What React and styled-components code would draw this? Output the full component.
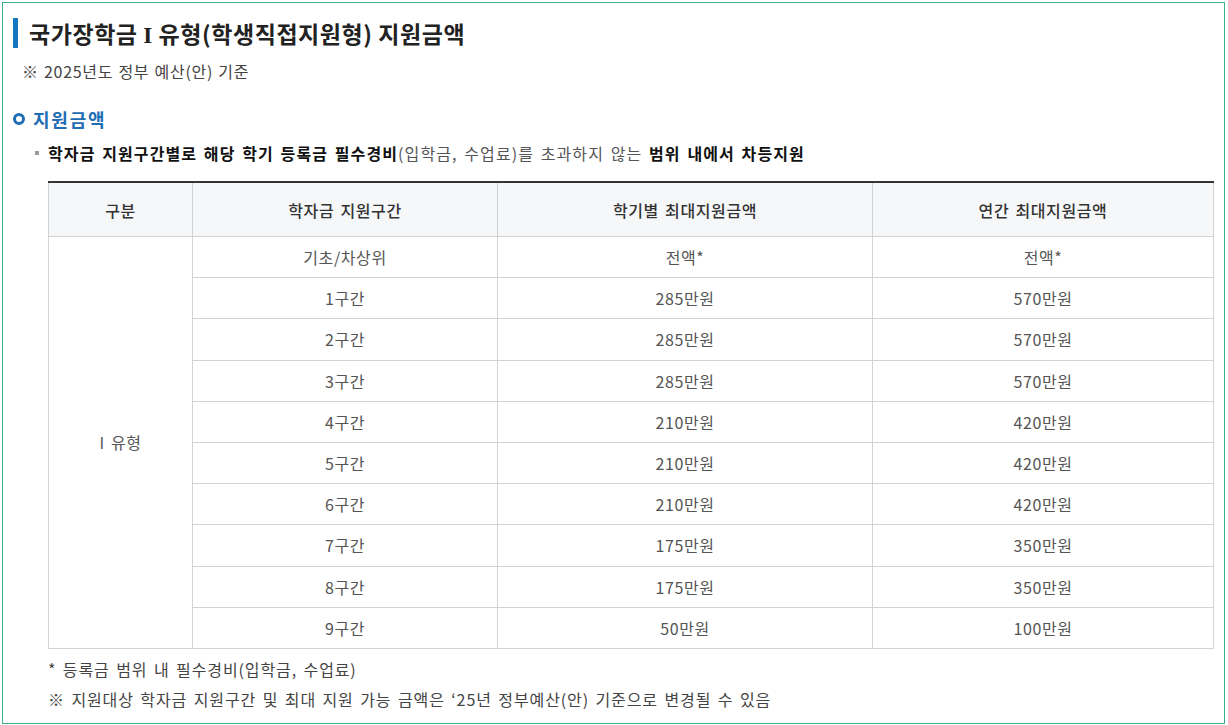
import React from 'react';
import styled, { createGlobalStyle } from 'styled-components';

const GlobalStyle = createGlobalStyle`
  html, body {
    margin: 0;
    padding: 0;
    background: #fff;
  }
  body {
    font-family: "Noto Sans CJK KR", "Noto Sans", sans-serif;
    color: #333;
  }
`;

const Frame = styled.div`
  box-sizing: border-box;
  width: 1223px;
  height: 722px;
  margin: 2px 0 0 2px;
  border: 1px solid #3bb08b;
  padding: 15px 11px 0 10px;
`;

const Title = styled.h2`
  margin: 0;
  border-left: 5px solid #1577c2;
  padding-left: 11px;
  font-size: 23px;
  line-height: 30px;
  font-weight: 700;
  letter-spacing: 0.55px;
  color: #222;
`;

const Roman = styled.span`
  font-family: "Liberation Serif", serif;
  line-height: 0;
`;

const Basis = styled.p`
  margin: 12px 0 0 9px;
  font-size: 16px;
  line-height: 22px;
  letter-spacing: 0.7px;
  word-spacing: 1px;
  color: #444;
`;

const SectionHead = styled.h3`
  margin: 24px 0 0;
  display: flex;
  align-items: center;
  gap: 8px;
  font-size: 18px;
  line-height: 26px;
  font-weight: 700;
  letter-spacing: 1.8px;
  color: #1f6db3;

  &::before {
    content: '';
    box-sizing: border-box;
    width: 12px;
    height: 12px;
    border: 3px solid #1f6db3;
    border-radius: 50%;
  }
`;

const BulletLine = styled.p`
  margin: 9px 0 0 22px;
  display: flex;
  align-items: center;
  gap: 9px;
  font-size: 16px;
  line-height: 24px;
  letter-spacing: 1.1px;
  word-spacing: 2px;
  color: #555;

  &::before {
    content: '';
    width: 4px;
    height: 4px;
    background: #9a9a9a;
  }

  b {
    color: #111;
    font-weight: 700;
  }
`;

const Table = styled.table`
  margin: 16px 0 0 35px;
  width: 1166px;
  border-collapse: collapse;
  border-top: 2px solid #333;
  table-layout: fixed;
  font-size: 16px;
  letter-spacing: 0.6px;
  word-spacing: 2px;
`;

const Th = styled.th`
  height: 53px;
  padding: 0;
  background: #f6f7f9;
  border: 1px solid #d2d2d2;
  border-top: none;
  font-weight: 500;
  color: #333;
`;

const Td = styled.td`
  height: 40.2px;
  padding: 0;
  border: 1px solid #d2d2d2;
  text-align: center;
  color: #555;
`;

const Notes = styled.div`
  margin: 5px 0 0 35px;
  font-size: 16px;
  line-height: 30px;
  letter-spacing: 0.9px;
  word-spacing: 2px;
  color: #444;
`;

const ranges = [
  ['기초/차상위', '전액*', '전액*'],
  ['1구간', '285만원', '570만원'],
  ['2구간', '285만원', '570만원'],
  ['3구간', '285만원', '570만원'],
  ['4구간', '210만원', '420만원'],
  ['5구간', '210만원', '420만원'],
  ['6구간', '210만원', '420만원'],
  ['7구간', '175만원', '350만원'],
  ['8구간', '175만원', '350만원'],
  ['9구간', '50만원', '100만원'],
];

export default function App() {
  return (
    <>
      <GlobalStyle />
      <Frame>
        <Title>
          국가장학금 <Roman>I</Roman> 유형(학생직접지원형) 지원금액
        </Title>
        <Basis>※ 2025년도 정부 예산(안) 기준</Basis>

        <SectionHead>지원금액</SectionHead>
        <BulletLine>
          <span>
            <b>학자금 지원구간별로 해당 학기 등록금 필수경비</b>(입학금, 수업료)를 초과하지 않는{' '}
            <b>범위 내에서 차등지원</b>
          </span>
        </BulletLine>

        <Table>
          <colgroup>
            <col style={{ width: 144 }} />
            <col style={{ width: 305 }} />
            <col style={{ width: 375 }} />
            <col />
          </colgroup>
          <thead>
            <tr>
              <Th>구분</Th>
              <Th>학자금 지원구간</Th>
              <Th>학기별 최대지원금액</Th>
              <Th>연간 최대지원금액</Th>
            </tr>
          </thead>
          <tbody>
            {ranges.map(([range, term, year], i) => (
              <tr key={range}>
                {i === 0 && <Td rowSpan={ranges.length}>I 유형</Td>}
                <Td>{range}</Td>
                <Td>{term}</Td>
                <Td>{year}</Td>
              </tr>
            ))}
          </tbody>
        </Table>

        <Notes>
          <div>* 등록금 범위 내 필수경비(입학금, 수업료)</div>
          <div>※ 지원대상 학자금 지원구간 및 최대 지원 가능 금액은 ‘25년 정부예산(안) 기준으로 변경될 수 있음</div>
        </Notes>
      </Frame>
    </>
  );
}
